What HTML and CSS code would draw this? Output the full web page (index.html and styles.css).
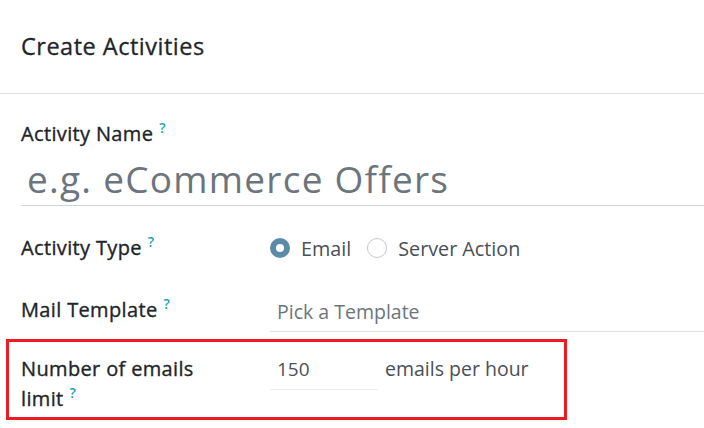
FILE: index.html
```html
<!DOCTYPE html>
<html>
<head>
<meta charset="utf-8">
<link rel="stylesheet" href="styles.css">
</head>
<body>
<div class="dialog">
  <header class="head">
    <h4 class="title">Create Activities</h4>
  </header>
  <main class="body">
    <div class="name-block">
      <label class="label">Activity Name<sup class="help">?</sup></label>
      <div class="big-input">e.g. eCommerce Offers</div>
    </div>
    <div class="row row-type">
      <label class="label">Activity Type<sup class="help">?</sup></label>
      <div class="value radios">
        <span class="radio on"></span><span class="radio-label">Email</span>
        <span class="radio"></span><span class="radio-label">Server Action</span>
      </div>
    </div>
    <div class="row row-tpl">
      <label class="label">Mail Template<sup class="help">?</sup></label>
      <div class="value">
        <div class="field placeholder">Pick a Template</div>
      </div>
    </div>
    <div class="row row-limit highlight">
      <label class="label">Number of emails<br>limit<sup class="help">?</sup></label>
      <div class="value limit">
        <div class="num">150</div>
        <span class="unit">emails per hour</span>
      </div>
    </div>
  </main>
</div>
</body>
</html>
```
FILE: styles.css
```css
* { box-sizing: border-box; }
html, body { margin: 0; padding: 0; background: #fff; }
body {
  font-family: "Open Sans", "Noto Sans", sans-serif;
  color: #212529;
  width: 704px;
  height: 428px;
  overflow: hidden;
}
.head {
  height: 94px;
  border-bottom: 1px solid #dee2e6;
  padding: 30px 21px 0;
}
.title {
  margin: 0;
  font-size: 23.5px;
  font-weight: 500;
  line-height: 32px;
  letter-spacing: 0.5px;
  -webkit-text-stroke: 0.3px currentColor;
}
.body {
  padding: 25px 0 0 21px;
}
.label {
  display: block;
  font-size: 20px;
  font-weight: 500;
  line-height: 30px;
  letter-spacing: 0.35px;
  width: 249px;
  flex: none;
  -webkit-text-stroke: 0.35px currentColor;
}
.help {
  display: inline-block;
  vertical-align: top;
  color: #17a2b8;
  font-size: 14px;
  line-height: 14px;
  font-weight: 600;
  margin-left: 6px;
  position: relative;
  top: 2px;
  letter-spacing: 0;
  -webkit-text-stroke: 0;
}
.big-input {
  margin-top: 4px;
  font-size: 37px;
  line-height: 52px;
  color: #6c757d;
  padding-left: 6px;
  border-bottom: 1px solid #ced4da;
  letter-spacing: 1.25px;
}
.row {
  display: flex;
  align-items: flex-start;
}
.row-type { margin-top: 27px; }
.row-tpl { margin-top: 32px; }
.value { flex: 1; }
.radios {
  display: flex;
  align-items: center;
  height: 30px;
  font-size: 19.75px;
  color: #495057;
}
.radio {
  width: 20px;
  height: 20px;
  border-radius: 50%;
  border: 1px solid #c4c8cc;
  margin: 0 11px 0 0;
  flex: none;
}
.radio.on {
  border: 6px solid #5a8ba8;
}
.radio-label { margin-right: 16px; }
.field {
  font-size: 19.5px;
  line-height: 30px;
  padding: 2px 0 4px 7px;
  border-bottom: 1px solid #dee2e6;
}
.placeholder { color: #6c757d; }
.highlight {
  margin-top: 7px;
  margin-left: -15px;
  width: 561px;
  border: 3px solid #ec1c24;
  padding: 12px 0 3px 12px;
}
.limit {
  display: flex;
  align-items: flex-start;
}
.num {
  width: 108px;
  font-size: 19px;
  line-height: 30px;
  color: #495057;
  border-bottom: 1px solid #e9ecef;
  padding: 0 0 5px 7px;
}
.unit {
  font-size: 19.5px;
  line-height: 30px;
  color: #495057;
  margin-left: 7px;
}
```
